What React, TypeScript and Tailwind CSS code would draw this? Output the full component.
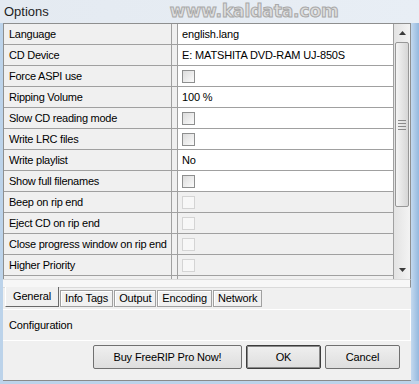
import React from "react";

type Row = { label: string; kind: "text" | "check"; value?: string; disabled?: boolean };

const rows: Row[] = [
  { label: "Language", kind: "text", value: "english.lang" },
  { label: "CD Device", kind: "text", value: "E: MATSHITA DVD-RAM UJ-850S" },
  { label: "Force ASPI use", kind: "check" },
  { label: "Ripping Volume", kind: "text", value: "100 %" },
  { label: "Slow CD reading mode", kind: "check" },
  { label: "Write LRC files", kind: "check" },
  { label: "Write playlist", kind: "text", value: "No" },
  { label: "Show full filenames", kind: "check" },
  { label: "Beep on rip end", kind: "check", disabled: true },
  { label: "Eject CD on rip end", kind: "check", disabled: true },
  { label: "Close progress window on rip end", kind: "check", disabled: true },
  { label: "Higher Priority", kind: "check", disabled: true },
];

const tabs = ["General", "Info Tags", "Output", "Encoding", "Network"];

function Check({ disabled }: { disabled?: boolean }) {
  return disabled ? (
    <span className="block w-[13px] h-[13px] border border-[#d4d4d4] bg-[#f7f7f7]" />
  ) : (
    <span className="block w-[13px] h-[13px] border border-[#8e8f8f] bg-gradient-to-br from-[#dcdcdc] to-[#fbfbfb]" />
  );
}

function Arrow({ down }: { down?: boolean }) {
  return (
    <svg width="7" height="4" viewBox="0 0 7 4">
      <path d={down ? "M0 0H7L3.5 4Z" : "M0 4H7L3.5 0Z"} fill="#3a3a3a" />
    </svg>
  );
}

function Scrollbar() {
  return (
    <div className="w-[17px] flex flex-col border-l border-[#a0a0a0] bg-gradient-to-r from-[#e3e3e3] to-[#f3f3f3]">
      <div className="h-[18px] flex items-center justify-center">
        <Arrow />
      </div>
      <div className="mx-[1px] h-[165px] rounded-[2px] border border-[#979797] bg-gradient-to-r from-[#f4f4f4] to-[#d6d6d6] flex items-center justify-center">
        <div className="w-[8px] flex flex-col gap-[2px]">
          <span className="h-px bg-[#8a8a8a]" />
          <span className="h-px bg-[#8a8a8a]" />
          <span className="h-px bg-[#8a8a8a]" />
          <span className="h-px bg-[#8a8a8a]" />
        </div>
      </div>
      <div className="flex-1" />
      <div className="h-[18px] flex items-center justify-center">
        <Arrow down />
      </div>
    </div>
  );
}

export default function App() {
  return (
    <div className="w-[419px] h-[384px] overflow-hidden flex flex-col bg-[#f0f0f0] text-[11px] tracking-[-0.15px] text-black font-['Liberation_Sans',Arial,sans-serif]">
      {/* title bar */}
      <div className="h-[23px] flex items-center bg-gradient-to-r from-[#e4eaf1] to-[#e8eef5]">
        <span className="pl-[4px] text-[13px] tracking-normal text-[#1e1e1e]">Options</span>
        <span className="ml-[121px] text-[17px] font-bold tracking-[-0.1px] text-[#dedede] [-webkit-text-stroke:1px_#a9a9a9] font-['DejaVu_Sans',sans-serif]">
          www.kaldata.com
        </span>
      </div>

      <div className="flex-1 flex">
        <div className="w-[3px] bg-[#bcd3ea]" />

        <div className="w-[408px] flex flex-col border-b border-[#8a8a8a]">
          {/* property grid */}
          <div className="flex border-l border-t border-r border-[#8e8f8f]">
            <div className="flex-1 h-[255px] flex flex-col">
              {rows.map((r) => (
                <div key={r.label} className="h-[21px] flex border-b border-[#a0a0a0]">
                  <div className="w-[168px] border-r border-[#a0a0a0] bg-[#f0f0f0] pl-[5px] flex items-center whitespace-nowrap tracking-[-0.25px]">
                    {r.label}
                  </div>
                  <div className="w-[5px] bg-[#f0f0f0]" />
                  <div
                    className={`flex-1 border-l border-[#a0a0a0] pl-[4px] flex items-center ${
                      r.disabled ? "bg-[#f0f0f0]" : "bg-white"
                    }`}
                  >
                    {r.kind === "text" ? <span>{r.value}</span> : <Check disabled={r.disabled} />}
                  </div>
                </div>
              ))}
              <div className="flex-1 flex">
                <div className="w-[168px] border-r border-[#a0a0a0]" />
                <div className="w-[5px]" />
                <div className="flex-1 border-l border-[#a0a0a0]" />
              </div>
            </div>
            <Scrollbar />
          </div>

          <div className="h-[9px] bg-[#f7f7f7] border-t border-[#dadada] border-b border-[#a0a0a0] border-r border-r-[#8e8f8f]" />

          {/* tabs at the bottom */}
          <div className="h-[21px] flex items-start pl-[2px]">
            {tabs.map((t, i) =>
              i === 0 ? (
                <div
                  key={t}
                  className="h-[20px] -mt-px px-[7px] flex items-end pb-[2px] bg-[#f0f0f0] border-l border-white border-r border-b border-r-[#696969] border-b-[#696969]"
                >
                  {t}
                </div>
              ) : (
                <div
                  key={t}
                  className="h-[17px] mt-[2px] ml-[1px] px-[4px] flex items-center border border-[#a0a0a0] shadow-[inset_1px_1px_0_#fff] bg-[#f0f0f0]"
                >
                  {t}
                </div>
              )
            )}
            <div className="flex-1" />
          </div>

          {/* configuration strip */}
          <div className="h-[32px] flex items-center pl-[6px] border-t border-white border-r border-r-white border-b border-[#a0a0a0]">
            Configuration
          </div>

          {/* buttons */}
          <div className="mt-[4px] flex gap-[4px] pl-[90px]">
            <button className="w-[149px] h-[24px] rounded-[2px] border border-[#707070] bg-gradient-to-b from-[#efefef] to-[#dedede]">
              Buy FreeRIP Pro Now!
            </button>
            <button className="w-[75px] h-[24px] rounded-[2px] border border-[#3c3c3c] shadow-[inset_0_0_0_1px_#8a8a8a] bg-gradient-to-b from-[#efefef] to-[#dedede]">
              OK
            </button>
            <button className="w-[75px] h-[24px] rounded-[2px] border border-[#707070] bg-gradient-to-b from-[#efefef] to-[#dedede]">
              Cancel
            </button>
          </div>
        </div>

        <div className="flex-1 bg-gradient-to-r from-[#c4d9ef] to-[#94b8de]" />
      </div>

      <div className="h-[3px] bg-[#bcd3ea]" />
    </div>
  );
}
